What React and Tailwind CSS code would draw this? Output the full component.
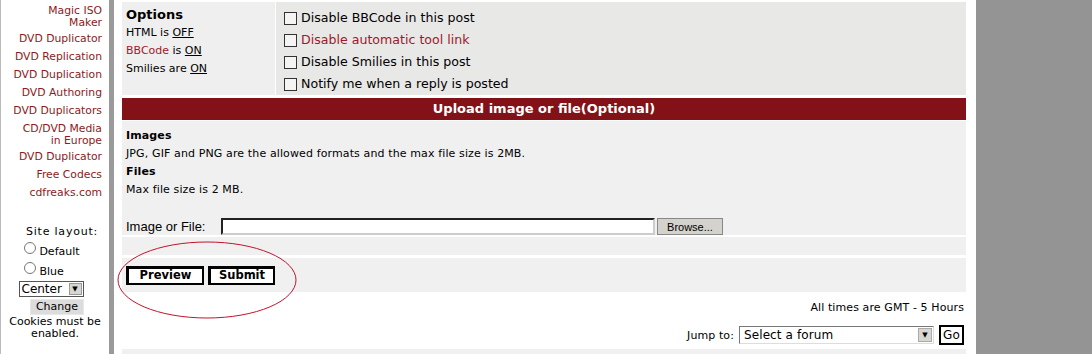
const sideLinks = [
  ["Magic ISO", "Maker"],
  ["DVD Duplicator"],
  ["DVD Replication"],
  ["DVD Duplication"],
  ["DVD Authoring"],
  ["DVD Duplicators"],
  ["CD/DVD Media", "in Europe"],
  ["DVD Duplicator"],
  ["Free Codecs"],
  ["cdfreaks.com"],
];

const verdana = "font-['DejaVu_Sans',Verdana,sans-serif]";

const Radio = ({ label }) => (
  <div className="flex items-end gap-[3px] h-[20px]">
    <span className="w-[12px] h-[12px] rounded-full border border-[#777] bg-white mb-[4px]" />
    <span className="text-[11px] leading-[12px]">{label}</span>
  </div>
);

const Check = ({ label, red }) => (
  <div className="flex items-center h-[22px] gap-[4px]">
    <span className="w-[13px] h-[13px] border border-[#333] bg-[#f4f4f2] shrink-0" />
    <span className={`text-[12.6px] ${red ? "text-[#a3172a]" : "text-black"}`}>{label}</span>
  </div>
);

const App = () => {
  return (
    <div className={`w-[1092px] h-[354px] overflow-hidden flex bg-white ${verdana}`}>
      {/* left sidebar */}
      <div className="w-[109px] shrink-0 border-l border-[#bbb] flex flex-col">
        <div className="flex flex-col items-end pr-[7px] pt-[5px] gap-[7px] text-[10.8px] leading-[11px] text-[#8c1a22] text-right">
          {sideLinks.map((lines, i) =>
            lines.length > 1 ? (
              <div key={i} className="-mb-[3px] leading-[12px]">
                {lines.map((l) => (
                  <div key={l}>{l}</div>
                ))}
              </div>
            ) : (
              <div key={i}>{lines[0]}</div>
            )
          )}
        </div>
        <div className="flex flex-col items-center mt-[28px] text-[11px] text-black pl-[6px]">
          <div className="leading-[12px] ml-[8px] tracking-[0.8px]">Site layout:</div>
          <div className="flex flex-col items-start -ml-[12px]">
            <Radio label="Default" />
            <Radio label="Blue" />
          </div>
          <div className="flex items-center w-[65px] h-[16px] border border-[#555] bg-white mt-[3px] -ml-[14px]">
            <span className="flex-1 text-[12px] leading-[14px] pl-[2px]">Center</span>
            <span className="w-[13px] h-[12px] mr-[1px] bg-[#d8d6d0] border border-[#999] flex items-center justify-center text-[7px] leading-none">▼</span>
          </div>
          <div className="w-[54px] h-[16px] mt-[2px] bg-[#dcdcdc] border border-[#e8e8e8] flex items-center justify-center text-[11px] -ml-[2px]">
            Change
          </div>
          <div className="text-center leading-[12px] mt-[1px] -ml-[6px] whitespace-nowrap">
            Cookies must be
            <br />
            enabled.
          </div>
        </div>
      </div>

      {/* divider */}
      <div className="w-[5px] shrink-0 bg-[#9a9a9a]" />

      {/* main */}
      <div className="w-[862px] shrink-0 pl-[8px] pr-[10px] pt-[2px] flex flex-col">
        {/* options */}
        <div className="flex h-[93px]">
          <div className="w-[153px] bg-[#efefef] px-[4px] pt-[5px]">
            <div className="text-[13px] font-bold leading-[16px]">Options</div>
            <div className="text-[11px] leading-[18px] mt-[1px]">
              <div>
                HTML is <span className="underline">OFF</span>
              </div>
              <div>
                <span className="text-[#a3172a]">BBCode</span> is <span className="underline">ON</span>
              </div>
              <div>
                Smilies are <span className="underline">ON</span>
              </div>
            </div>
          </div>
          <div className="w-[1px] bg-white" />
          <div className="flex-1 bg-[#e8e8e7] pl-[8px] pt-[5px]">
            <Check label="Disable BBCode in this post" />
            <Check label="Disable automatic tool link" red />
            <Check label="Disable Smilies in this post" />
            <Check label="Notify me when a reply is posted" />
          </div>
        </div>

        {/* upload header */}
        <div className="mt-[3px] h-[22px] bg-[#821218] text-white text-[13px] font-bold flex items-center justify-center">
          Upload image or file(Optional)
        </div>

        {/* upload body */}
        <div className="mt-[1px] bg-[#f0f0f0] h-[114px] px-[4px] pt-[6px] text-[11px] tracking-[0.12px]">
          <div className="font-bold leading-[18px]">Images</div>
          <div className="leading-[18px]">JPG, GIF and PNG are the allowed formats and the max file size is 2MB.</div>
          <div className="font-bold leading-[18px]">Files</div>
          <div className="leading-[18px]">Max file size is 2 MB.</div>
          <div className="flex items-center mt-[18px] font-['Liberation_Sans',Arial,sans-serif] tracking-normal">
            <span className="text-[13px] w-[95px]">Image or File:</span>
            <span className="w-[434px] h-[17px] bg-white border-2 border-t-[#222] border-l-[#222] border-b-[#ccc] border-r-[#ccc]" />
            <span className="ml-[2px] w-[66px] h-[17px] bg-[#d4d2cc] border border-[#888] flex items-center justify-center text-[11px]">
              Browse...
            </span>
          </div>
        </div>

        <div className="mt-[2px] h-[18px] bg-[#f0f0f0]" />

        {/* buttons row */}
        <div className="mt-[3px] h-[34px] bg-[#f0f0f0] flex items-center gap-[4px] px-[4px]">
          <span className="w-[78px] h-[19px] bg-white border-black border-t-[3px] border-l-[3px] border-r-2 border-b-2 flex items-center justify-center text-[11.5px] font-bold">
            Preview
          </span>
          <span className="w-[67px] h-[19px] bg-white border-black border-t-[3px] border-l-[3px] border-r-2 border-b-2 flex items-center justify-center text-[11.5px] font-bold">
            Submit
          </span>
        </div>

        {/* footer */}
        <div className="flex flex-col items-end pr-[2px] text-[11px] tracking-[0.1px]">
          <div className="mt-[10px] leading-[12px]">All times are GMT - 5 Hours</div>
          <div className="flex items-center mt-[11px]">
            <span className="mr-[5px] mt-[2px]">Jump to:</span>
            <span className="w-[195px] h-[18px] bg-white border border-t-[#777] border-l-[#777] border-b-[#ddd] border-r-[#ddd] flex items-center">
              <span className="flex-1 text-[12px] pl-[4px]">Select a forum</span>
              <span className="w-[14px] h-[14px] mr-[1px] bg-[#d8d6d0] border border-[#aaa] flex items-center justify-center text-[7px] leading-none">▼</span>
            </span>
            <span className="ml-[5px] w-[25px] h-[20px] bg-white border-2 border-black flex items-center justify-center text-[12px]">
              Go
            </span>
          </div>
        </div>
        <div className="mt-auto h-[5px] bg-[#f0f0f0]" />
      </div>

      {/* right gray */}
      <div className="flex-1 bg-[#949494]" />

      {/* annotation ellipse */}
      <svg className="absolute left-0 top-0 pointer-events-none" width="1092" height="354">
        <ellipse cx="207" cy="280" rx="89" ry="38" fill="none" stroke="#c0142e" strokeWidth="1" />
      </svg>
    </div>
  );
};

export default App;
